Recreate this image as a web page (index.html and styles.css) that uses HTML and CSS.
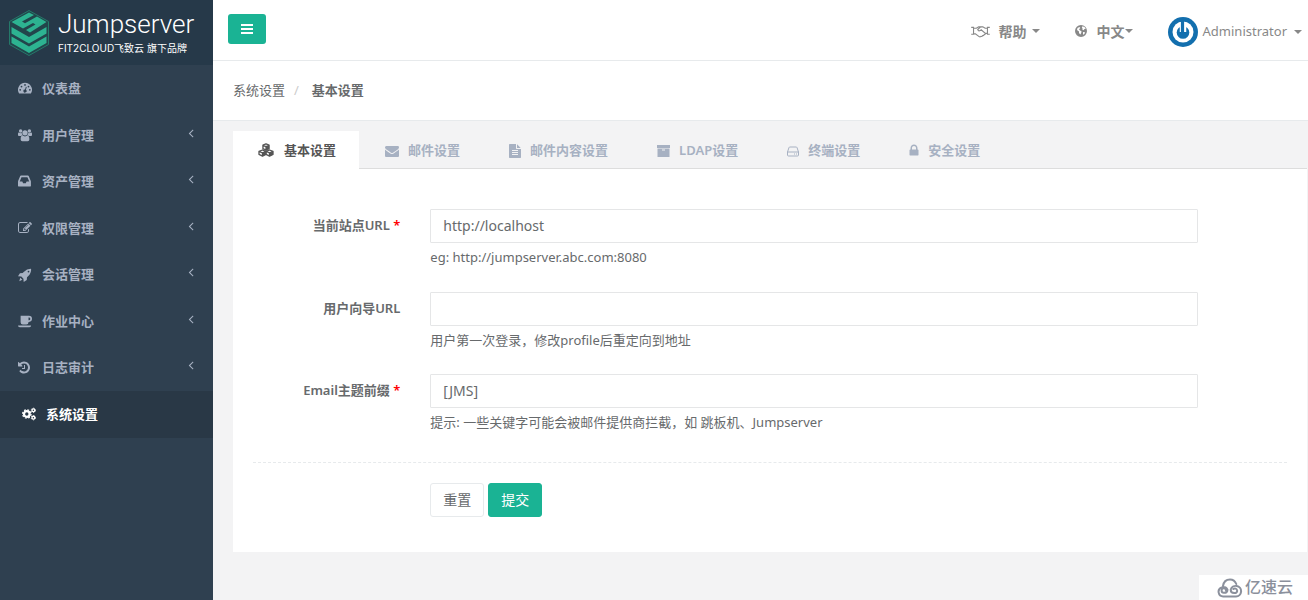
FILE: index.html
```html
<!DOCTYPE html>
<html lang="zh-CN">
<head>
<meta charset="utf-8">
<title>Jumpserver</title>
<link rel="stylesheet" href="styles.css">
</head>
<body>
<div class="layout">
<aside class="sidebar">
  <a class="brand" href="#">
    <svg class="brand-mark" viewBox="0 0 42 48" aria-hidden="true">
      <path d="M21 1.500 40.500 12.500V35.500L21 46.500 1.500 35.500V12.500Z" fill="#22454b" stroke="#25796a" stroke-width="1"/>
      <path d="M3.500 13 21 3.500l5 2.500-12 6.500 3 1.700L29 7.500l9.500 5.500L22 23.500l-4-2.500 9.500-5.500-2.500-1.500-10 5.500Z" fill="#2db391"/>
      <path d="M3.500 18 21 28l17.500-10v6.500L21 34.500 3.500 24.500ZM3.500 27.500 21 37.500l17.500-10V34L21 44 3.500 34Z" fill="#2db391"/>
    </svg>
    <span class="brand-text"><span class="brand-name">Jumpserver</span><span class="brand-sub">FIT2CLOUD飞致云 旗下品牌</span></span>
  </a>
  <nav class="menu">
    <a class="menu-item" href="#"><svg class="icon" viewBox="0 0 16 16"><path fill-rule="evenodd" d="M8 2a8 8 0 0 0-6.700 12.300h13.400A8 8 0 0 0 8 2ZM8 3.500a1 1 0 1 1 0 2 1 1 0 0 1 0-2ZM4 5.300a1 1 0 1 1 0 2 1 1 0 0 1 0-2ZM2.500 9a1 1 0 1 1 0 2 1 1 0 0 1 0-2ZM12 5.300a1 1 0 1 1 0 2 1 1 0 0 1 0-2ZM13.500 9a1 1 0 1 1 0 2 1 1 0 0 1 0-2ZM9 6.500l1 .3-.9 3.300A1.800 1.800 0 1 1 8 9.700Z"/></svg><span>仪表盘</span></a>
    <a class="menu-item" href="#"><svg class="icon" viewBox="0 0 16 16"><circle cx="3" cy="3.500" r="2"/><circle cx="13" cy="3.500" r="2"/><circle cx="8" cy="5.500" r="3"/><path d="M0 8V6.500Q0 5 1 5q2 1.300 3.500.7Q4.300 7.300 5.500 8.200 4 8.200 3.300 9H1Q0 9 0 8ZM16 8V6.500Q16 5 15 5q-2 1.300-3.500.7.200 1.600-1 2.500 1.500 0 2.200.8H15q1 0 1-1ZM5.300 8.700Q8 10.500 10.700 8.700 13 8.700 13 13q0 2-2 2H5q-2 0-2-2 0-4.300 2.300-4.300Z"/></svg><span>用户管理</span><svg class="arrow" viewBox="0 0 1792 1792"><path d="M1203 544q0 13-10 23l-393 393 393 393q10 10 10 23t-10 23l-50 50q-10 10-23 10t-23-10l-466-466q-10-10-10-23t10-23l466-466q10-10 23-10t23 10l50 50q10 10 10 23z"/></svg></a>
    <a class="menu-item" href="#"><svg class="icon" viewBox="128 64 1664 1664"><path d="M1151 960h316q-1-3-2.500-8t-2.500-8l-212-496h-708l-212 496q-1 2-2.500 8t-2.500 8h316l95 192h320zm513 30v482q0 26-19 45t-45 19h-1408q-26 0-45-19t-19-45v-482q0-62 25-123l238-552q10-25 36.500-42t52.500-17h832q26 0 52.500 17t36.500 42l238 552q25 61 25 123z"/></svg><span>资产管理</span><svg class="arrow" viewBox="0 0 1792 1792"><path d="M1203 544q0 13-10 23l-393 393 393 393q10 10 10 23t-10 23l-50 50q-10 10-23 10t-23-10l-466-466q-10-10-10-23t10-23l466-466q10-10 23-10t23 10l50 50q10 10 10 23z"/></svg></a>
    <a class="menu-item" href="#"><svg class="icon" viewBox="0 0 1792 1792"><path d="M888 1184l116-116-152-152-116 116v56h96v96h56zm440-720q-16-16-33 1l-350 350q-17 17-1 33t33-1l350-350q17-17 1-33zm80 594v190q0 119-84.500 203.500t-203.500 84.500h-832q-119 0-203.500-84.500t-84.500-203.500v-832q0-119 84.500-203.500t203.500-84.500h832q63 0 117 25 15 7 18 23 3 17-9 29l-49 49q-14 14-32 8-23-6-45-6h-832q-66 0-113 47t-47 113v832q0 66 47 113t113 47h832q66 0 113-47t47-113v-126q0-13 9-22l64-64q15-15 35-7t20 29zm-96-738l288 288-672 672h-288v-288zm444 132l-92 92-288-288 92-92q28-28 68-28t68 28l152 152q28 28 28 68t-28 68z"/></svg><span>权限管理</span><svg class="arrow" viewBox="0 0 1792 1792"><path d="M1203 544q0 13-10 23l-393 393 393 393q10 10 10 23t-10 23l-50 50q-10 10-23 10t-23-10l-466-466q-10-10-10-23t10-23l466-466q10-10 23-10t23 10l50 50q10 10 10 23z"/></svg></a>
    <a class="menu-item" href="#"><svg class="icon" viewBox="0 0 16 16"><path fill-rule="evenodd" d="M15 1q.3 4.500-3.500 8.500l-1.200 1.100-.3 3.200L6.500 16l-.3-3.800-2.400-2.400L0 9.500 2.200 6l3.200-.3 1.100-1.200Q10.500.7 15 1ZM12 3a1 1 0 1 0 0 2 1 1 0 0 0 0-2ZM2.500 11 5 13.500 1.500 15Z"/></svg><span>会话管理</span><svg class="arrow" viewBox="0 0 1792 1792"><path d="M1203 544q0 13-10 23l-393 393 393 393q10 10 10 23t-10 23l-50 50q-10 10-23 10t-23-10l-466-466q-10-10-10-23t10-23l466-466q10-10 23-10t23 10l50 50q10 10 10 23z"/></svg></a>
    <a class="menu-item" href="#"><svg class="icon" viewBox="0 0 16 16"><path fill-rule="evenodd" d="M3 2h9.500a3.500 3.500 0 0 1 0 7H12v.5Q12 12 9.500 12h-4Q3 12 3 9.500ZM12 4v3.200h.5a1.600 1.600 0 0 0 0-3.200ZM0 13h15q0 2-2 2H2q-2 0-2-2Z"/></svg><span>作业中心</span><svg class="arrow" viewBox="0 0 1792 1792"><path d="M1203 544q0 13-10 23l-393 393 393 393q10 10 10 23t-10 23l-50 50q-10 10-23 10t-23-10l-466-466q-10-10-10-23t10-23l466-466q10-10 23-10t23 10l50 50q10 10 10 23z"/></svg></a>
    <a class="menu-item" href="#"><svg class="icon" viewBox="128 64 1792 1792"><path d="M1664 896q0 156-61 298t-164 245-245 164-298 61q-172 0-327-72.500t-264-204.500q-7-10-6.500-22.500t8.500-20.500l137-138q10-9 25-9 16 2 23 12 73 95 179 147t225 52q104 0 198.500-40.500t163.500-109.500 109.500-163.500 40.500-198.500-40.500-198.500-109.500-163.500-163.500-109.500-198.500-40.500q-98 0-188 35.500t-160 101.500l137 138q31 30 14 69-17 40-59 40h-448q-26 0-45-19t-19-45v-448q0-42 40-59 39-17 69 14l130 129q107-101 244.500-156.500t284.500-55.500q156 0 298 61t245 164 164 245 61 298zm-640-288v448q0 14-9 23t-23 9h-320q-14 0-23-9t-9-23v-64q0-14 9-23t23-9h224v-352q0-14 9-23t23-9h64q14 0 23 9t9 23z"/></svg><span>日志审计</span><svg class="arrow" viewBox="0 0 1792 1792"><path d="M1203 544q0 13-10 23l-393 393 393 393q10 10 10 23t-10 23l-50 50q-10 10-23 10t-23-10l-466-466q-10-10-10-23t10-23l466-466q10-10 23-10t23 10l50 50q10 10 10 23z"/></svg></a>
    <a class="menu-item active" href="#"><svg class="icon" viewBox="0 0 16 16"><circle cx="5.500" cy="8" r="3.200" fill="none" stroke="currentColor" stroke-width="2.600"/><circle cx="5.500" cy="8" r="4.800" fill="none" stroke="currentColor" stroke-width="1.500" stroke-dasharray="2 1.770"/><circle cx="13" cy="3.800" r="1.600" fill="none" stroke="currentColor" stroke-width="1.500"/><circle cx="13" cy="3.800" r="2.500" fill="none" stroke="currentColor" stroke-width="1" stroke-dasharray="1.300 1.320"/><circle cx="13" cy="12.200" r="1.600" fill="none" stroke="currentColor" stroke-width="1.500"/><circle cx="13" cy="12.200" r="2.500" fill="none" stroke="currentColor" stroke-width="1" stroke-dasharray="1.300 1.320"/></svg><span>系统设置</span></a>
  </nav>
</aside>
<div class="main">
  <header class="topbar">
    <button class="toggle" type="button" aria-label="菜单"><svg viewBox="0 0 14 14"><path d="M1 2h12v2H1zM1 6h12v2H1zM1 10h12v2H1z"/></svg></button>
    <div class="top-links">
      <a class="top-link help" href="#"><svg class="shake" viewBox="0 0 20 14" fill="none" stroke="currentColor" stroke-width="1.200"><path d="M0 2.500h2.500v7.500H0M20 2.500h-2.500v7.500H20M2.500 3.500h3L8 2h2M2.500 9.500h2l4 3q1 .6 2-.2 1.300.2 1.800-.8 1.400 0 1.700-1.200 1.500-.1 1.300-1.500M17.500 3.500H15L12.500 2h-2.300L7 4.800Q7.500 7 9.700 6l1-.9L15.300 9h2.200"/></svg><strong>帮助</strong><span class="caret"></span></a>
      <a class="top-link lang" href="#"><svg class="globe" viewBox="0 0 14 14"><path fill-rule="evenodd" d="M7 1a6 6 0 1 0 0 12A6 6 0 0 0 7 1ZM8.500 2.300l2 .7 1.300 1.700-1.300.3-1 1.200-1.200-.7.200-1.300L7.800 3.500ZM3.500 4 5.500 3l.8 1L5 5.300 6 6.500l1.500.8-.3 1.600-.9 1.600L5 9V7.600L3 6ZM9 8l2 .2-.6 1.700-1.400.9Z"/></svg><strong>中文</strong><span class="caret"></span></a>
      <a class="top-link user" href="#"><svg class="avatar" viewBox="0 0 30 30"><circle cx="15" cy="15" r="15" fill="#136fae"/><circle cx="15" cy="15" r="10.500" fill="#fff"/><circle cx="15" cy="15.500" r="6.300" fill="#136fae"/><path d="M15 5v10" stroke="#fff" stroke-width="6.500"/><path d="M14.500 3v12.500" stroke="#136fae" stroke-width="3.200"/></svg><span>Administrator</span><span class="caret"></span></a>
    </div>
  </header>
  <nav class="crumbs" aria-label="路径"><a href="#">系统设置</a><span class="slash">/</span><strong>基本设置</strong></nav>
  <main class="content">
    <nav class="tabs">
      <a class="tab active" href="#"><svg class="t16" viewBox="0 0 18 16" fill="none" stroke="currentColor" stroke-width="1.500" stroke-linejoin="round"><path d="M9 1l3.500 1.500V6.500L9 8 5.500 6.500v-4ZM5.500 2.700 9 4.200l3.500-1.500M9 4.200V8M5 8l3.800 1.500V13L5 15 1 13V9.500ZM1 9.700l4 1.600 3.800-1.600M5 11.300V15M13 8l4 1.500V13l-4 2-3.800-2V9.500ZM9.200 9.700l3.800 1.600 4-1.600M13 11.300V15"/><path fill="currentColor" stroke="none" d="M9 4.200l3.500-1.500v4L9 8ZM5 11.300l3.800-1.600V13L5 15ZM13 11.300l4-1.600V13l-4 2Z"/></svg>基本设置</a>
      <a class="tab" href="#"><svg class="t14" viewBox="0 0 1792 1792"><path d="M1792 710v794q0 66-47 113t-113 47h-1472q-66 0-113-47t-47-113v-794q44 49 101 87 362 246 497 345 57 42 92.500 65.500t94.500 48 110 24.500h2q51 0 110-24.500t94.500-48 92.500-65.500q170-123 498-345 57-39 100-87zm0-294q0 79-49 151t-122 123q-376 261-468 325-10 7-42.500 31t-54 38.500-52 32.500-57.500 27-50 9h-2q-23 0-50-9t-57.500-27-52-32.500-54-38.500-42.500-31q-91-64-262-182.500t-205-142.500q-62-42-117-115.500t-55-136.500q0-78 41.500-130t118.500-52h1472q65 0 112.500 47t47.500 113z"/></svg>邮件设置</a>
      <a class="tab" href="#"><svg class="t12" viewBox="128 0 1536 1792"><path d="M1596 476q14 14 28 36h-472v-472q22 14 36 28zm-476 164h544v1056q0 40-28 68t-68 28h-1344q-40 0-68-28t-28-68v-1600q0-40 28-68t68-28h800v544q0 40 28 68t68 28zm160 736v-64q0-14-9-23t-23-9h-704q-14 0-23 9t-9 23v64q0 14 9 23t23 9h704q14 0 23-9t9-23zm0-256v-64q0-14-9-23t-23-9h-704q-14 0-23 9t-9 23v64q0 14 9 23t23 9h704q14 0 23-9t9-23zm0-256v-64q0-14-9-23t-23-9h-704q-14 0-23 9t-9 23v64q0 14 9 23t23 9h704q14 0 23-9t9-23z"/></svg>邮件内容设置</a>
      <a class="tab" href="#"><svg class="t13" viewBox="0 0 13 14"><path fill-rule="evenodd" d="M0 1h13v3H0zM.5 4.500h12V13H.5zM5 5.500v1h3v-1z"/></svg>LDAP设置</a>
      <a class="tab" href="#"><svg class="t12" viewBox="0 0 12 14" fill="none" stroke="currentColor"><path d="M.5 8 2 3.500Q2.200 3 3 3h6q.8 0 1 .5L11.500 8v3q0 1-1 1h-9q-1 0-1-1ZM.5 8h11M7 10h1M9 10h1"/></svg>终端设置</a>
      <a class="tab" href="#"><svg class="t10" viewBox="256 128 1280 1664"><path d="M640 768h512v-192q0-106-75-181t-181-75-181 75-75 181v192zm832 96v576q0 40-28 68t-68 28h-960q-40 0-68-28t-28-68v-576q0-40 28-68t68-28h32v-192q0-184 132-316t316-132 316 132 132 316v192h32q40 0 68 28t28 68z"/></svg>安全设置</a>
    </nav>
    <form class="panel">
      <div class="row"><label for="site">当前站点URL <span class="req">*</span></label><div class="field"><input id="site" type="text" value="http://localhost"><p>eg: http://jumpserver.abc.com:8080</p></div></div>
      <div class="row"><label for="guide">用户向导URL</label><div class="field"><input id="guide" type="text"><p>用户第一次登录，修改profile后重定向到地址</p></div></div>
      <div class="row"><label for="prefix">Email主题前缀 <span class="req">*</span></label><div class="field"><input id="prefix" type="text" value="[JMS]"><p>提示: 一些关键字可能会被邮件提供商拦截，如 跳板机、Jumpserver</p></div></div>
      <hr>
      <div class="row actions"><div class="field"><button class="btn" type="reset">重置</button><button class="btn primary" type="submit">提交</button></div></div>
    </form>
  </main>
</div>
</div>
<div class="badge"><svg viewBox="0 0 26 20" fill="none" stroke="currentColor" stroke-width="2" stroke-linecap="round"><path d="M6 8Q7 1.500 13 1.500q4.500 0 6.300 4.500M9 12.500a2.200 2.200 0 1 0-2.200 2.200q3.700.3 3.700-3A4.700 4.700 0 1 0 6.500 18.500h12.500a5.300 5.300 0 1 0-5.300-6.800q0 3.300 3.500 3.300a2.300 2.300 0 1 0-.8-4"/></svg><span>亿速云</span></div>
</body>
</html>
```
FILE: styles.css
```css
* { box-sizing: border-box; }
body {
  margin: 0;
  background: #2f4050;
  color: #676a6c;
  font-family: "Noto Sans", "Noto Sans CJK SC", sans-serif;
  font-size: 13px;
  line-height: 1.42857;
}
a { color: inherit; text-decoration: none; }
svg { display: block; flex: none; fill: currentColor; }
svg[fill="none"] { fill: none; }
button, input { font: inherit; }
.layout { display: flex; min-height: 100vh; }

.sidebar { flex: none; width: 213px; background: #2f4050; }
.brand { display: flex; align-items: center; gap: 8px; height: 65px; padding: 0 8px; background: #263949; color: #fff; }
.brand-mark { width: 42px; height: 48px; }
.brand-text { display: flex; flex-direction: column; }
.brand-name { font-family: Roboto, sans-serif; font-weight: 300; font-size: 26px; line-height: 30px; }
.brand-sub { font-family: Inter, "Noto Sans CJK SC", sans-serif; font-size: 10px; line-height: 18px; white-space: nowrap; }
.menu-item { display: flex; align-items: center; padding: 14px 15px 14px 18px; color: #a7b1c2; font-weight: 600; }
.menu-item.active { padding-left: 22px; background: #293846; color: #fff; }
.icon { width: 14px; height: 14px; margin-right: 10px; }
.arrow { align-self: flex-start; width: 14px; height: 14px; margin-left: auto; }

.main { flex: 1; min-width: 0; background: #f3f3f4; }
.topbar { display: flex; align-items: center; justify-content: space-between; height: 61px; padding: 0 6px 0 15px; border-bottom: 1px solid #e7eaec; background: #fff; }
.toggle { display: flex; align-items: center; justify-content: center; width: 38px; height: 30px; margin-bottom: 2px; padding: 0; border: 0; border-radius: 3px; background: #1ab394; color: #fff; }
.toggle svg { width: 14px; height: 14px; }
.top-links { display: flex; align-items: center; padding-top: 3px; color: #888; }
.top-link { display: flex; align-items: center; }
.top-link strong { font-size: 14px; font-weight: 600; }
.help { margin-right: 34px; }
.lang { margin-right: 35px; }
.shake { width: 19px; height: 13px; margin-right: 9px; }
.globe { width: 14px; height: 14px; margin-right: 9px; }
.avatar { width: 30px; height: 30px; margin-right: 5px; }
.caret { border: 4px solid transparent; border-top-color: currentColor; border-bottom: 0; }
.help .caret { margin-left: 5px; }
.user .caret { margin-left: 7px; }
.crumbs { display: flex; align-items: center; height: 60px; padding: 0 20px; border-bottom: 1px solid #e7eaec; background: #fff; }
.crumbs strong { font-weight: 600; }
.slash { margin: 0 13px 0 9px; color: #ccc; }

.content { padding: 10px 1px 49px 20px; }
.tabs { display: flex; border-bottom: 1px solid #ddd; }
.tab { display: flex; align-items: center; height: 37px; padding: 2px 23px 0 26px; color: #a7b1c2; font-weight: 600; white-space: nowrap; }
.tab svg { height: 14px; margin-right: 9px; }
.tab.active { height: 38px; margin-bottom: -1px; padding: 0 23px 0 25px; background: #fff; color: #555; }
.tab .t16 { width: 16px; margin-right: 10px; }
.t14 { width: 14px; }
.t13 { width: 13px; }
.t12 { width: 12px; }
.t10 { width: 10px; }

.panel { padding: 40px 20px 35px; background: #fff; }
.row { display: flex; margin: 0 -15px 15px; }
.row label { width: 16.6667%; padding: 7px 15px 0; text-align: right; font-weight: 600; }
.req { color: #f00; }
.field { width: 75%; padding: 0 15px; }
.field input { display: block; width: 100%; height: 34px; padding: 5px 12px 7px; border: 1px solid #e5e6e7; border-radius: 1px; background: #fff; color: inherit; font-size: 14px; outline: 0; }
.field p { margin: 5px 0 10px; }
hr { height: 0; margin: 20px 0; border: 0; border-top: 1px dashed #e7eaec; }
.actions { margin-bottom: 0; }
.actions .field { display: flex; gap: 4px; margin-left: 16.6667%; }
.btn { height: 34px; padding: 0 12px; border: 1px solid #e7eaec; border-radius: 3px; background: #fff; color: inherit; font-size: 14px; }
.btn.primary { border-color: #1ab394; background: #1ab394; color: #fff; }

.badge { position: fixed; right: 0; bottom: 0; display: flex; align-items: center; gap: 2px; width: 109px; height: 25px; padding-left: 18px; background: #fff; color: #8b909c; font-size: 16px; font-weight: 500; }
.badge svg { width: 26px; height: 20px; }
```
